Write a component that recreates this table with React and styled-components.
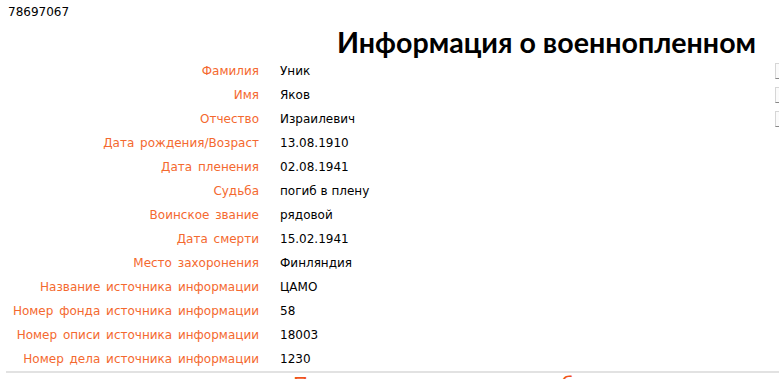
import React from "react";
import styled, { createGlobalStyle } from "styled-components";

const GlobalStyle = createGlobalStyle`
  html, body {
    margin: 0;
    padding: 0;
    background: #fff;
    overflow: hidden;
  }
  body {
    font-family: "DejaVu Sans", Verdana, sans-serif;
    font-size: 12px;
    color: #000;
  }
`;

const Page = styled.div`
  width: 820px;
  padding: 4px 0 0 8px;
  box-sizing: border-box;
`;

const RecordId = styled.div`
  height: 16px;
  line-height: 16px;
`;

const Title = styled.h1`
  margin: 6px 0 0 0;
  padding-left: 329px;
  height: 33px;
  font-family: "Lato", "Open Sans", sans-serif;
  font-weight: 700;
  font-size: 28.6px;
  line-height: 33px;
  white-space: nowrap;
`;

const Table = styled.div`
  display: grid;
  grid-template-columns: 251px 1fr 20px;
  column-gap: 21px;
  margin-left: -2px;
  padding-left: 2px;
  border-bottom: 2px solid #e2e2e2;
  width: 787px;
`;

const Label = styled.div`
  height: 24px;
  line-height: 24px;
  text-align: right;
  color: #f4692f;
  word-spacing: 2px;
  white-space: nowrap;
`;

const Value = styled.div`
  height: 24px;
  line-height: 24px;
  white-space: nowrap;
`;

const Cell = styled.div`
  height: 24px;
  display: flex;
  align-items: center;
`;

const Control = styled.span`
  display: block;
  width: 20px;
  height: 14px;
  border: 1px solid #d6d6d6;
  border-bottom-color: #888;
  background: #fbfbfb;
`;

const Section = styled.h2`
  margin: 0;
  padding-left: 285px;
  font-family: "DejaVu Sans", Verdana, sans-serif;
  font-weight: 400;
  font-size: 20px;
  line-height: 22px;
  color: #f0541c;
  white-space: nowrap;
`;

const rows = [
  ["Фамилия", "Уник", true],
  ["Имя", "Яков", true],
  ["Отчество", "Израилевич", true],
  ["Дата рождения/Возраст", "13.08.1910"],
  ["Дата пленения", "02.08.1941"],
  ["Судьба", "погиб в плену"],
  ["Воинское звание", "рядовой"],
  ["Дата смерти", "15.02.1941"],
  ["Место захоронения", "Финляндия"],
  ["Название источника информации", "ЦАМО"],
  ["Номер фонда источника информации", "58"],
  ["Номер описи источника информации", "18003"],
  ["Номер дела источника информации", "1230"],
];

export default function App() {
  return (
    <>
      <GlobalStyle />
      <Page>
        <RecordId>78697067</RecordId>
        <Title>Информация о военнопленном</Title>
        <Table>
          {rows.map(([label, value, ctrl]) => (
            <React.Fragment key={label}>
              <Label>{label}</Label>
              <Value>{value}</Value>
              <Cell>{ctrl && <Control />}</Cell>
            </React.Fragment>
          ))}
        </Table>
        <Section>Поиск родственников по базе данных</Section>
      </Page>
    </>
  );
}
